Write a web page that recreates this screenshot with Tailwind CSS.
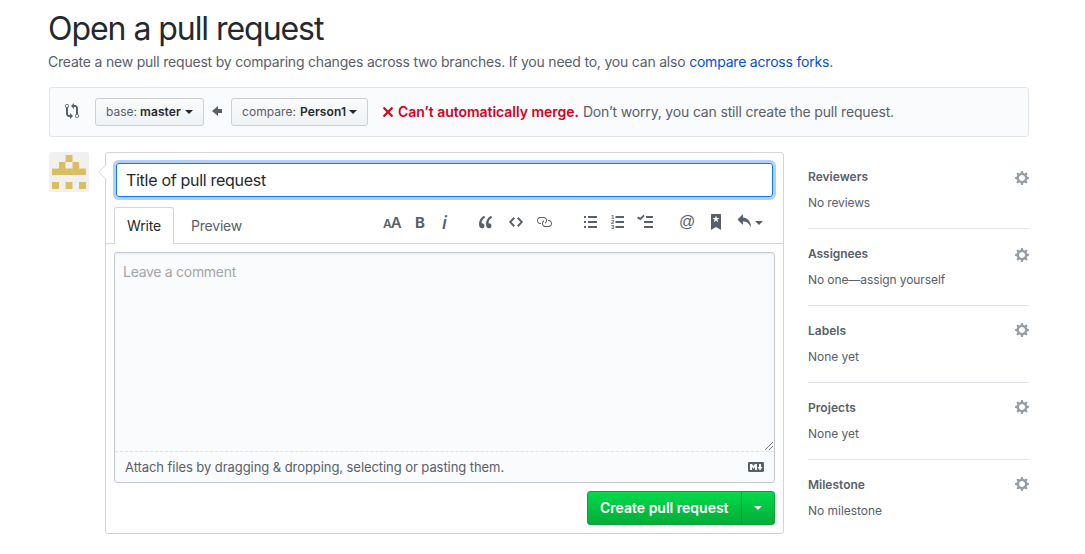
<!DOCTYPE html>
<html lang="en">
<head>
<meta charset="utf-8">
<title>Open a pull request</title>
<script src="https://cdn.jsdelivr.net/npm/@tailwindcss/browser@4"></script>
</head>
<body class="bg-white text-[#586069] font-['Inter',sans-serif] text-sm h-[554px] overflow-hidden">
<svg class="hidden">
  <symbol id="gear" viewBox="0 0 14 16"><path fill-rule="evenodd" d="M14 8.77v-1.6l-1.94-.64-.45-1.09.88-1.84-1.13-1.13-1.81.91-1.09-.45-.69-1.92h-1.6l-.63 1.94-1.11.45-1.84-.88-1.13 1.13.91 1.81-.45 1.09L0 7.23v1.59l1.94.64.45 1.09-.88 1.84 1.13 1.13 1.81-.91 1.09.45.69 1.92h1.59l.63-1.94 1.11-.45 1.84.88 1.13-1.13-.92-1.81.47-1.09L14 8.75v.02zM7 11c-1.66 0-3-1.34-3-3s1.34-3 3-3 3 1.34 3 3-1.34 3-3 3z"/></symbol>
</svg>
<div class="ml-[49px] w-[980px] pt-[5px]">
  <h1 class="-ml-px text-[32px] leading-[48px] text-[#24292e] whitespace-nowrap tracking-[-1.05px]">Open a pull request</h1>
  <p class="leading-[21px] -mt-[2px] -ml-px whitespace-nowrap tracking-[-0.205px]">Create a new pull request by comparing changes across two branches. If you need to, you can also <a class="text-[#0050db]">compare across forks</a>.</p>

  <div class="mt-[15px] h-[50px] border border-[#e1e4e8] rounded-[3px] bg-[#fafbfc] flex items-center whitespace-nowrap">
    <svg class="ml-[15px] w-[14px] h-4 shrink-0 -mt-[2px]" viewBox="0 0 14 16" fill="#586069"><path fill-rule="evenodd" d="M5 12H4c-.27-.02-.48-.11-.69-.31-.21-.2-.3-.42-.31-.69V4.72A1.993 1.993 0 0 0 2 1a1.993 1.993 0 0 0-1 3.72V11c.03.78.34 1.47.94 2.06.6.59 1.28.91 2.06.94h1v2l3-3-3-3v2zM2 1.8c.66 0 1.2.55 1.2 1.2 0 .65-.55 1.2-1.2 1.2C1.35 4.2.8 3.65.8 3c0-.65.55-1.2 1.2-1.2zm11 9.48V5c-.03-.78-.34-1.47-.94-2.06-.6-.59-1.28-.91-2.06-.94H9V0L6 3l3 3V4h1c.27.02.48.11.69.31.21.2.3.42.31.69v6.28A1.993 1.993 0 0 0 12 15a1.993 1.993 0 0 0 1-3.72zm-1 2.92c-.66 0-1.2-.55-1.2-1.2 0-.65.55-1.2 1.2-1.2.65 0 1.2.55 1.2 1.2 0 .65-.55 1.2-1.2 1.2z"/></svg>
    <button class="ml-4 w-[109px] h-7 px-[10px] text-xs border border-[#cdcfd1] rounded-[3px] bg-linear-to-b from-[#fafbfc] to-[#eff3f6] flex items-center shrink-0"><span>base:</span><b class="ml-[3px] font-semibold text-[#24292e] tracking-[0.1px]">master</b><i class="ml-auto border-4 border-b-0 border-transparent border-t-[#24292e]"></i></button>
    <svg class="ml-2 w-[10px] h-4 shrink-0 -mt-[2px]" viewBox="0 0 10 16" fill="#586069"><path d="M6 3L0 8l6 5v-3h4V6H6z"/></svg>
    <button class="ml-[9px] w-[137px] h-7 px-[10px] text-xs border border-[#cdcfd1] rounded-[3px] bg-linear-to-b from-[#fafbfc] to-[#eff3f6] flex items-center shrink-0"><span class="tracking-[0.06px]">compare:</span><b class="ml-1 font-semibold text-[#24292e] tracking-[0.1px]">Person1</b><i class="ml-auto border-4 border-b-0 border-transparent border-t-[#24292e]"></i></button>
    <svg class="ml-[14px] w-3 h-4 shrink-0" viewBox="0 0 12 16" fill="#d7001f"><path d="M7.48 8l3.75 3.75-1.48 1.48L6 9.48l-3.75 3.75-1.48-1.48L4.52 8 .77 4.25l1.48-1.48L6 6.52l3.75-3.75 1.48 1.48z"/></svg>
    <b class="ml-[4px] font-semibold text-[#d7001f] tracking-[-0.03px]">Can’t automatically merge.</b><span class="ml-1 tracking-[-0.169px]">Don’t worry, you can still create the pull request.</span>
  </div>

  <div class="mt-[15px] flex">
    <svg class="w-10 h-10 shrink-0 rounded-[3px]" viewBox="0 0 40 40"><path fill="#f0f0f0" d="M0 0h40v40H0z"/><path fill="#dabf62" fill-rule="evenodd" d="M16.500 3h7v7h6.500v6.500h7v6.500H3v-6.500h7V10h6.500zM16.500 10v6.500h7V10zM3 30h7v7H3zM16.500 30h7v7h-7zM30 30h7v7h-7z"/></svg>
    <div class="relative ml-4 w-[679px] h-[382px] border border-[#d1d5da] rounded-[3px] shrink-0">
      <svg class="absolute -left-[8px] top-[11px] w-[9px] h-[16px]" viewBox="0 0 9 16"><path d="M8.500 0L.700 8l7.800 8" fill="white" stroke="#d1d5da"/></svg>
      <div class="mx-[10px] mt-[10px] h-[34px] border border-[#0a7cf5] rounded-[3px] shadow-[0_0_0_3px_#b3cff6] flex items-center px-[9px] text-base text-[#24292e] tracking-[-0.29px]">Title of pull request</div>
      <div class="mt-[10px] h-[37px] border-b border-[#d1d5da] flex whitespace-nowrap">
        <div class="ml-2 h-[37px] w-[60px] border border-b-0 border-[#d1d5da] rounded-t-[3px] bg-white text-[#24292e] pl-3 leading-[36px] tracking-[-0.16px]">Write</div>
        <div class="ml-[17px] w-[51px] leading-[38px] tracking-[-0.21px]">Preview</div>
        <div class="ml-[141px] h-[30px] flex items-center text-[#586069]">
          <span class="w-[18px] font-semibold leading-none tracking-[-1px] flex items-baseline"><span class="text-[12px]">A</span><span class="text-[15px]">A</span></span>
          <span class="ml-[14px] w-[10px] font-bold text-[15px] leading-none">B</span>
          <span class="ml-[17px] w-[6px] font-semibold italic text-[17px] leading-none font-['Noto_Sans']">i</span>
          <svg class="ml-[31px] w-[14px] h-4" viewBox="0 0 14 16" fill="currentColor"><path d="M6.160 3.500C3.730 5.060 2.550 6.670 2.550 9.360c.16-.05.3-.05.44-.05 1.270 0 2.500.86 2.500 2.410 0 1.610-1.030 2.610-2.500 2.610-1.900 0-2.990-1.520-2.990-4.250 0-3.800 1.750-6.530 5.020-8.420L6.160 3.500zm7 0c-2.430 1.560-3.610 3.170-3.610 5.860.16-.05.3-.05.44-.05 1.270 0 2.500.86 2.500 2.410 0 1.610-1.030 2.610-2.500 2.610-1.890 0-2.980-1.520-2.980-4.250 0-3.800 1.750-6.530 5.020-8.420l1.130 1.840z"/></svg>
          <svg class="ml-4 w-[14px] h-4" viewBox="0 0 14 16" fill="currentColor"><path d="M9.500 3L8 4.500 11.500 8 8 11.500 9.500 13 14 8 9.500 3zm-5 0L0 8l4.500 5L6 11.500 2.500 8 6 4.500 4.500 3z"/></svg>
          <svg class="ml-[13px] w-4 h-4" viewBox="0 0 16 16" fill="currentColor"><path d="M4 9h1v1H4c-1.500 0-3-1.690-3-3.500S2.550 3 4 3h4c1.450 0 3 1.690 3 3.500 0 1.410-.91 2.720-2 3.250V8.590c.58-.45 1-1.270 1-2.090C10 5.220 8.980 4 8 4H4c-.98 0-2 1.220-2 2.500S3 9 4 9zm9-3h-1v1h1c1 0 2 1.220 2 2.500S13.980 12 13 12H9c-.98 0-2-1.220-2-2.500 0-.83.42-1.640 1-2.090V6.250c-1.090.53-2 1.840-2 3.250C6 11.310 7.550 13 9 13h4c1.450 0 3-1.690 3-3.500S14.500 6 13 6z"/></svg>
          <svg class="ml-[32px] w-[13px] h-4" viewBox="0 0 13 16" fill="currentColor"><path d="M0 2h2v2H0zM4 2h9v2H4zM0 7h2v2H0zM4 7h9v2H4zM0 12h2v2H0zM4 12h9v2H4z"/></svg>
          <svg class="ml-[14px] w-[13px] h-4" viewBox="0 0 13 16" fill="currentColor"><path d="M4.500 2H13v2H4.500zM4.500 7H13v2H4.500zM4.500 12H13v2H4.500z"/><g class="font-['Liberation_Sans'] font-bold text-[6px]"><text x="0" y="5">1</text><text x="0" y="10">2</text><text x="0" y="15">3</text></g></svg>
          <svg class="ml-[13px] w-4 h-4" viewBox="0 0 16 16" fill="currentColor"><path d="M9 2h7v2H9zM7 7h9v2H7zM7 12h9v2H7zM7.700 2L3.500 6.300 0 4.200 1.200 2.500l2.100 1.200L6.400.8z"/></svg>
          <span class="ml-[26px] w-[16px] text-[16px] leading-none font-['Liberation_Sans'] -mt-px">@</span>
          <svg class="ml-[16px] w-[10px] h-4" viewBox="0 0 10 16" fill="currentColor"><path fill-rule="evenodd" d="M9 0H1C.27 0 0 .27 0 1v15l5-3.090L10 16V1c0-.73-.27-1-1-1zm-.78 4.250L6.360 5.610l.72 2.160c.06.22-.02.28-.2.17L5 6.600 3.120 7.940c-.19.11-.25.05-.2-.17l.72-2.160-1.860-1.360c-.17-.16-.14-.23.09-.23l2.300-.03.7-2.160h.25l.7 2.160 2.300.03c.23 0 .27.08.09.23h.01z"/></svg>
          <svg class="ml-4 w-[14px] h-4" viewBox="0 0 14 16" fill="currentColor"><path d="M6 3.500c3.920.44 8 3.125 8 10-2.312-5.062-4.750-6-8-6V11L.5 5.500 6 0v3.500z"/></svg>
          <i class="ml-[4px] mt-[2px] border-4 border-b-0 border-transparent border-t-[#586069]"></i>
        </div>
      </div>
      <div class="mx-2 mt-2 h-[231px] border border-[#c6cbd1] rounded-[3px] bg-[#fafbfc] flex flex-col shadow-[inset_0_1px_2px_rgba(27,31,35,0.075)]">
        <div class="h-[198px] pl-2 pt-[8px] leading-[21px] text-[#a3a6a9] flex justify-between"><span class="tracking-[-0.287px]">Leave a comment</span>
          <svg class="self-end w-[9px] h-[9px]" viewBox="0 0 9 9" stroke="#555" stroke-width=".8"><path d="M0 8L8 0M4 8l4-4"/></svg></div>
        <div class="h-[31px] border-t border-dashed border-[#dfe2e5] px-[10px] flex items-center justify-between text-[13px]"><span class="tracking-[-0.067px]">Attach files by dragging &amp; dropping, selecting or pasting them.</span>
          <svg class="w-4 h-4" viewBox="0 0 16 16" fill="#586069"><path fill-rule="evenodd" d="M14.850 3H1.150C.52 3 0 3.520 0 4.150v7.690C0 12.480.52 13 1.150 13h13.690c.64 0 1.150-.52 1.150-1.150v-7.700C16 3.520 15.480 3 14.850 3zM9 11H7V8L5.500 9.920 4 8v3H2V5h2l1.500 2L7 5h2v6zm2.990.5L9.500 8H11V5h2v3h1.500l-2.510 3.500z"/></svg></div>
      </div>
      <div class="mt-2 mr-2 flex justify-end">
        <div class="w-[188px] h-[34px] border border-[#08a535] rounded-[3px] bg-linear-to-b from-[#00db4b] to-[#05ac38] text-white font-semibold flex items-center whitespace-nowrap"><span class="pl-3 w-[153px]">Create pull request</span><span class="self-stretch flex-1 border-l border-[#08962f] flex items-center justify-center pr-px"><i class="border-4 border-b-0 border-transparent border-t-white"></i></span></div>
      </div>
    </div>
    <aside class="ml-6 w-[221px] text-xs">
      <section class="h-[77px] border-b border-[#e1e4e8] pt-4"><div class="flex justify-between leading-[18px]"><b class="font-semibold">Reviewers</b><svg class="w-[14px] h-4 mt-[2px]" fill="#959da5"><use href="#gear"/></svg></div><p class="mt-2 leading-[18px] tracking-[-0.12px]">No reviews</p></section>
      <section class="h-[77px] border-b border-[#e1e4e8] pt-4"><div class="flex justify-between leading-[18px]"><b class="font-semibold tracking-[-0.06px]">Assignees</b><svg class="w-[14px] h-4 mt-[2px]" fill="#959da5"><use href="#gear"/></svg></div><p class="mt-2 leading-[18px] tracking-[-0.09px]">No one—assign yourself</p></section>
      <section class="h-[77px] border-b border-[#e1e4e8] pt-4"><div class="flex justify-between leading-[18px]"><b class="font-semibold">Labels</b><svg class="w-[14px] h-4" fill="#959da5"><use href="#gear"/></svg></div><p class="mt-2 leading-[18px] tracking-[-0.02px]">None yet</p></section>
      <section class="h-[77px] border-b border-[#e1e4e8] pt-4"><div class="flex justify-between leading-[18px]"><b class="font-semibold tracking-[0.06px]">Projects</b><svg class="w-[14px] h-4" fill="#959da5"><use href="#gear"/></svg></div><p class="mt-2 leading-[18px] tracking-[-0.02px]">None yet</p></section>
      <section class="h-[73px] pt-4"><div class="flex justify-between leading-[18px]"><b class="font-semibold">Milestone</b><svg class="w-[14px] h-4" fill="#959da5"><use href="#gear"/></svg></div><p class="mt-2 leading-[18px] tracking-[-0.03px]">No milestone</p></section>
    </aside>
  </div>
</div>
</body>
</html>
